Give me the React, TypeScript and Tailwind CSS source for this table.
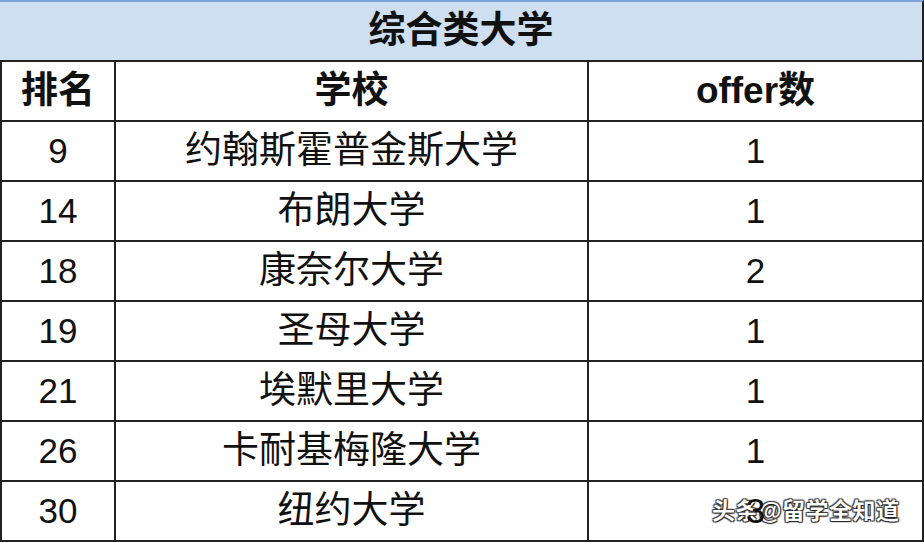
import React from "react";

const rows: [string, string, string][] = [
  ["9", "约翰斯霍普金斯大学", "1"],
  ["14", "布朗大学", "1"],
  ["18", "康奈尔大学", "2"],
  ["19", "圣母大学", "1"],
  ["21", "埃默里大学", "1"],
  ["26", "卡耐基梅隆大学", "1"],
  ["30", "纽约大学", "3"],
];

const font = { fontFamily: '"Liberation Sans", "Noto Sans CJK SC", sans-serif' };

function Row({ cells, bold }: { cells: [string, string, string]; bold?: boolean }) {
  const w = bold ? "font-bold" : "font-normal";
  return (
    <div className="flex h-[60px] border-t-2 border-[#222]">
      <div className={`w-[112px] flex items-center justify-center ${bold ? "text-[37px]" : "text-[35px]"} text-[#111] ${w}`}>{cells[0]}</div>
      <div className="w-[2px] bg-[#222]" />
      <div className={`w-[471px] flex items-center justify-center text-[37px] text-[#111] ${w}`}>{cells[1]}</div>
      <div className="w-[2px] bg-[#222]" />
      <div className={`w-[333px] flex items-center justify-center ${bold ? "text-[37px]" : "text-[35px]"} text-[#111] ${w}`}>{cells[2]}</div>
    </div>
  );
}

export default function App() {
  return (
    <div className="relative w-[924px] h-[542px] bg-white overflow-hidden" style={font}>
      <div className="absolute z-0 left-[712px] top-[494px] text-[23px] font-bold text-white tracking-[0.5px] [text-shadow:0_0_1px_#222,1px_1px_1px_#222,-1px_-1px_1px_#444,1px_-1px_1px_#444,-1px_1px_1px_#444]">
        头条@留学全知道
      </div>
      <div className="relative z-10 flex flex-col w-[924px]">
        <div className="h-[60px] bg-[#cddff0] border-t-2 border-[#7ea3d8] border-r-2 border-r-[#222] flex items-center justify-center">
          <span className="text-[37px] font-bold text-[#111]">综合类大学</span>
        </div>
        <div className="border-x-2 border-[#222] border-b-2 border-b-[#222]">
          <Row cells={["排名", "学校", "offer数"]} bold />
          {rows.map((r) => (
            <Row key={r[0]} cells={r} />
          ))}
        </div>
      </div>
    </div>
  );
}
